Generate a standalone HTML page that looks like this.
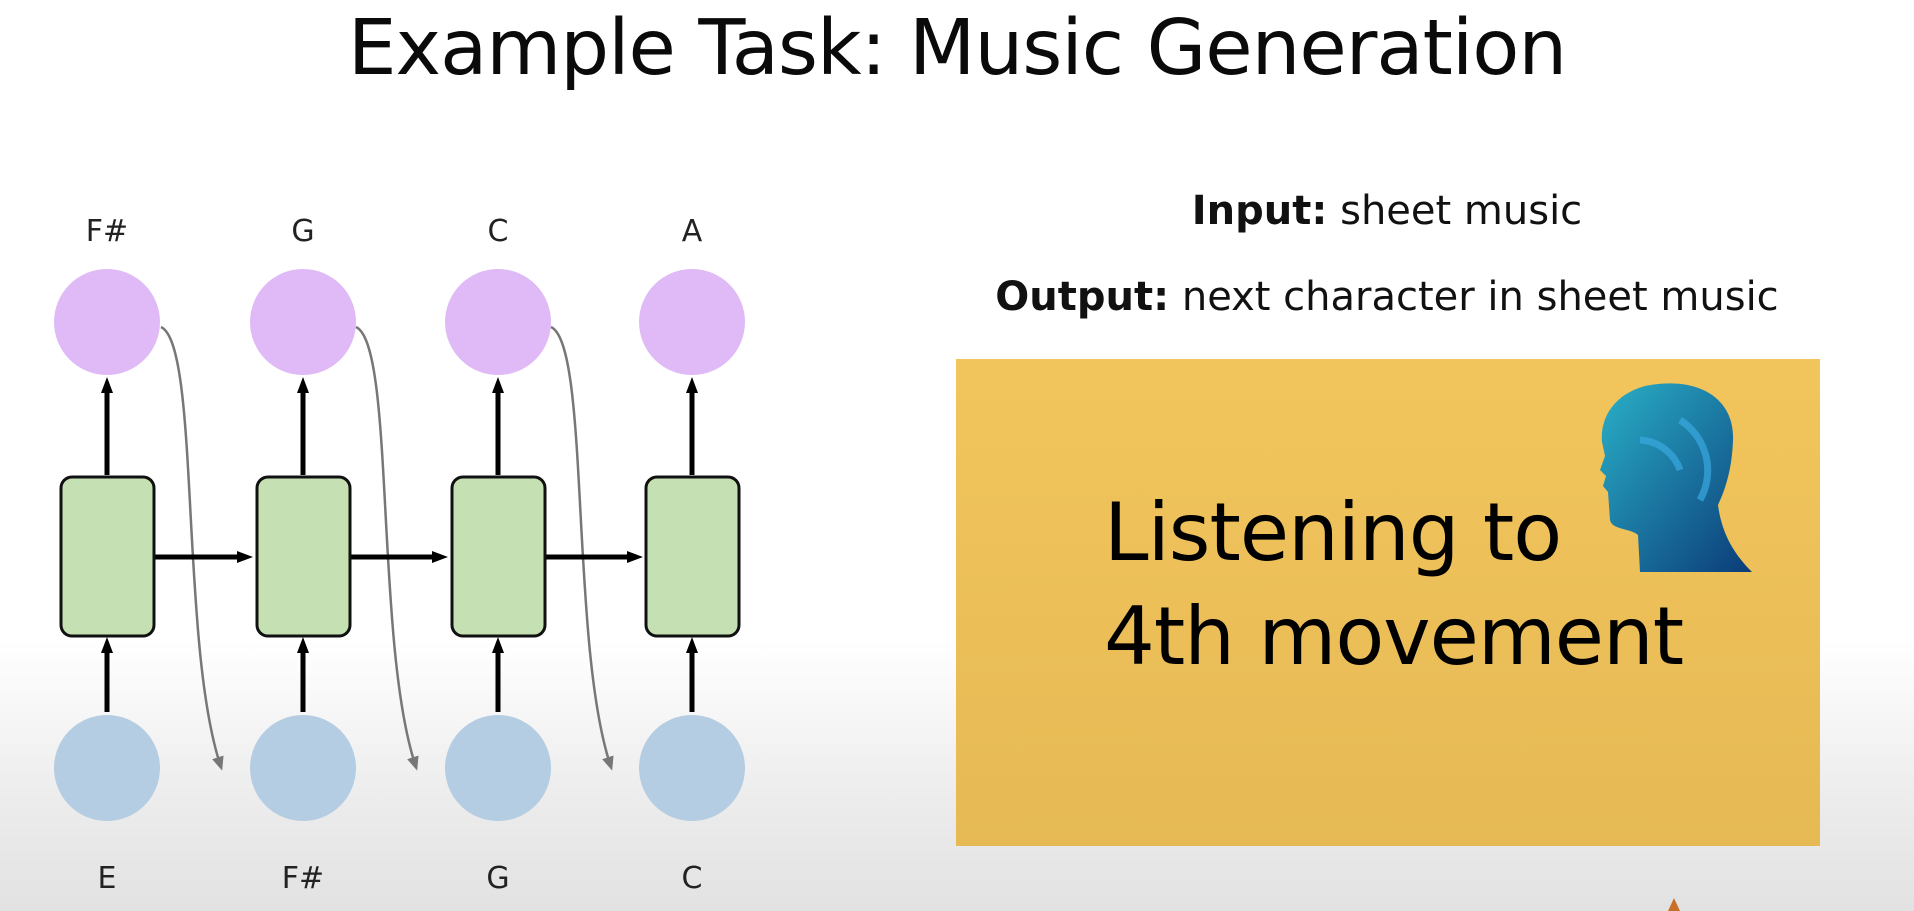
<!DOCTYPE html>
<html><head><meta charset="utf-8"><style>
html,body{margin:0;padding:0}
body{width:1914px;height:911px;overflow:hidden;position:relative;font-family:"DejaVu Sans","Liberation Sans",sans-serif;
background:linear-gradient(to bottom,#fff 0px,#fff 640px,#ececec 800px,#e2e2e2 911px);}
.t{position:absolute;white-space:nowrap;color:#111}
</style></head><body>
<div class="t" style="left:0;width:1914px;text-align:center;top:4px;font-size:77px;letter-spacing:-1px;color:#0a0a0a">Example Task: Music Generation</div>
<div class="t" style="left:992px;width:790px;text-align:center;top:188px;font-size:40px"><b>Input:</b> sheet music</div>
<div class="t" style="left:992px;width:790px;text-align:center;top:274px;font-size:40px"><b>Output:</b> next character in sheet music</div>
<div style="position:absolute;left:956px;top:359px;width:864px;height:487px;background:linear-gradient(#f2c55c,#e6b955)"></div>
<div class="t" style="left:1104px;top:481px;font-size:80px;line-height:104px;color:#000;letter-spacing:-1px">Listening to<br>4th movement</div>
<svg style="position:absolute;left:0;top:0" width="1914" height="911">
<defs><linearGradient id="hg" x1="0" y1="0" x2="1" y2="1"><stop offset="0" stop-color="#2ab0c8"/><stop offset="1" stop-color="#0b3c78"/></linearGradient>
<marker id="ab" markerUnits="userSpaceOnUse" markerWidth="16" markerHeight="16" refX="8" refY="8" orient="auto"><path d="M0,2L16,8L0,14z" fill="#000"/></marker>
<marker id="ag" markerUnits="userSpaceOnUse" markerWidth="14" markerHeight="14" refX="7" refY="7" orient="auto"><path d="M0,1L14,7L0,13z" fill="#777"/></marker></defs>
<path d="M1640,572 L1638,535 C1630,528 1612,530 1610,520 L1608,492 1603,486 1606,476 1600,470 1605,456 1602,442 C1600,420 1612,395 1645,386 C1700,375 1735,400 1733,440 C1732,470 1725,490 1718,505 C1722,535 1735,555 1752,572 Z" fill="url(#hg)"/>
<path d="M1640,440 A45,45 0 0 1 1680,470 M1680,420 A60,60 0 0 1 1700,500" stroke="#3aa8e0" stroke-width="7" fill="none" opacity=".7"/>
<g font-size="30" fill="#222" text-anchor="middle" font-family="DejaVu Sans, sans-serif">
<text x="107" y="241">F#</text><text x="303" y="241">G</text><text x="498" y="241">C</text><text x="692" y="241">A</text>
<text x="107" y="888">E</text><text x="303" y="888">F#</text><text x="498" y="888">G</text><text x="692" y="888">C</text>
</g>
<g fill="#dfbaf7"><circle cx="107" cy="322" r="53"/><circle cx="303" cy="322" r="53"/><circle cx="498" cy="322" r="53"/><circle cx="692" cy="322" r="53"/></g>
<g fill="#b5cde2"><circle cx="107" cy="768" r="53"/><circle cx="303" cy="768" r="53"/><circle cx="498" cy="768" r="53"/><circle cx="692" cy="768" r="53"/></g>
<g stroke="#777" stroke-width="2.5" fill="none" marker-end="url(#ag)">
<path d="M161,327 C200,345 180,640 220,764"/><path d="M356,327 C395,345 375,640 415,764"/><path d="M551,327 C590,345 570,640 610,764"/>
</g>
<g stroke="#000" stroke-width="5" marker-end="url(#ab)">
<path d="M107,475 V385"/><path d="M303,475 V385"/><path d="M498,475 V385"/><path d="M692,475 V385"/>
<path d="M107,712 V645"/><path d="M303,712 V645"/><path d="M498,712 V645"/><path d="M692,712 V645"/>
<path d="M154,557 H245"/><path d="M350,557 H440"/><path d="M545,557 H635"/>
</g>
<g fill="#c5e0b3" stroke="#111" stroke-width="3">
<rect x="61" y="477" width="93" height="159" rx="11"/><rect x="257" y="477" width="93" height="159" rx="11"/><rect x="452" y="477" width="93" height="159" rx="11"/><rect x="646" y="477" width="93" height="159" rx="11"/>
</g>
<path d="M1668,911 L1674,898 L1680,911z" fill="#c8702a"/>
</svg>
</body></html>
